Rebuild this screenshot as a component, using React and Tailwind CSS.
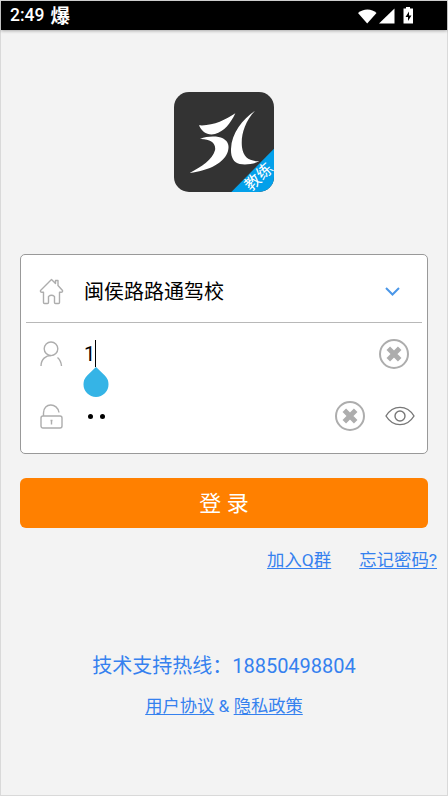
const ClearIcon = () => (
  <svg viewBox="0 0 30 30" className="size-[30px] shrink-0" fill="none" stroke="#adadad">
    <circle cx="15" cy="15" r="14" strokeWidth="2" />
    <path d="M9.3 9.3 20.7 20.7M20.7 9.3 9.3 20.7" strokeWidth="5" />
  </svg>
);

const Logo = () => (
  <svg viewBox="0 0 300 300" className="size-[100px] rounded-[15px] bg-[#333333]">
    <path
      fill="#fff"
      d="M75 100C115 103 154 84 184 64C170 94 151 119 123 126C101 131 83 120 75 100ZM78 141C101 131 133 132 146 139C160 147 167 157 162 177C153 210 108 236 47 243C83 225 116 202 123 175C127 153 108 140 78 141ZM243 56C211 91 200 131 204 166C208 196 225 208 256 208C239 217 213 219 197 216C178 212 170 194 171 171C173 122 205 83 243 56Z"
    />
    <path fill="#03a0ea" d="M300 170V300H172Z" />
    <text
      x="251"
      y="251"
      transform="rotate(-43 251 251)"
      textAnchor="middle"
      dominantBaseline="central"
      fill="#fff"
      fontSize="48"
      className="font-['Noto_Sans_CJK_SC',sans-serif]"
    >
      教练
    </text>
  </svg>
);

export default function App() {
  return (
    <div className="flex h-[796px] w-[448px] flex-col border border-[#d9d9d9] bg-[#f3f3f3] font-['Roboto','Noto_Sans_CJK_SC',sans-serif] text-black">
      <header className="flex h-[29px] shrink-0 items-center bg-black pl-[9px] pr-[33px] text-white shadow-[0_1px_3px_rgba(0,0,0,0.3)]">
        <span className="text-[17.5px] font-medium leading-none">2:49</span>
        <span className="ml-[6px] pt-[2px] text-[19.5px] font-bold leading-[27px]">爆</span>
        <svg viewBox="0 0 57 18" className="ml-auto h-[18px] w-[57px]" fill="#fff">
          <path d="M1 6C6 1.2 15 1.2 19.500 6L10.200 16.500Z" />
          <path d="M37.500 1.500V16.500H22Z" />
          <path d="M49 1.500V0H53V1.500H56V16.500H46.500V1.500Z" />
          <path d="M52 4.500 48.500 10H51V14L54.500 8.500H52Z" fill="#000" />
        </svg>
      </header>

      <div className="mt-[62px] flex justify-center">
        <Logo />
      </div>

      <section className="mx-[19px] mt-[62px] h-[200px] shrink-0 rounded-[5px] border-[1.500px] border-[#999] bg-white">
        <div className="mx-[5px] flex h-[68px] items-center border-b border-[#b8b8b8] pl-[13px] pr-[22px] pt-[6px]">
          <svg viewBox="0 0 25 27" className="h-[27px] w-[25px]" fill="none" stroke="#adadad" strokeWidth="1.4" strokeLinejoin="round">
            <path d="M12.500 1.500 1.500 12.500Q1 14 3 14.200H4.500V24.500Q4.500 25.500 5.500 25.500H8.500Q9.500 25.500 9.500 24.500V18.500Q12.500 16 15.500 18.500V24.500Q15.500 25.500 16.500 25.500H19.500Q20.500 25.500 20.500 24.500V14.200H22Q24 14 23.500 12.500L19 7.500V2.500H16.500V5.500Z" />
          </svg>
          <span className="ml-[20px] text-[20px] leading-7">闽侯路路通驾校</span>
          <svg viewBox="0 0 15 9" className="ml-auto h-[9px] w-[15px]" fill="none" stroke="#4b97e8" strokeWidth="2">
            <path d="M1 1 7.500 7.500 14 1" />
          </svg>
        </div>

        <div className="flex h-[61px] items-center pl-[19px] pr-[18px]">
          <svg viewBox="0 0 23 26" className="h-[26px] w-[23px]" fill="none" stroke="#adadad" strokeWidth="1.4">
            <circle cx="11" cy="7.800" r="6.800" />
            <path d="M1 25C1 18 6 14.500 11 14.500M17.500 16.500Q21 19.500 21.500 25" />
          </svg>
          <div className="relative ml-[21px] flex h-[27px] items-center text-[20px]">
            <span>1</span>
            <span className="absolute left-[11px] top-0 h-[27px] w-px bg-black" />
            <svg viewBox="0 0 26 30" className="absolute -left-px top-[27px] h-[30px] w-[26px]" fill="#35b4e6">
              <path d="M13 0 21.800 8.500A12.500 12.500 0 1 1 4.200 8.500Z" />
            </svg>
          </div>
          <div className="ml-auto flex">
            <ClearIcon />
          </div>
        </div>

        <div className="flex h-[64px] items-center pl-[19px] pr-3">
          <svg viewBox="0 0 23 25" className="h-[25px] w-[23px]" fill="none" stroke="#adadad" strokeWidth="1.4">
            <rect x="1" y="12" width="21" height="12" rx="2" />
            <path d="M3.500 12V9C3.500-1.500 17.500-1.500 19 8.500M11.500 16V20.500M10.500 16.500H12.500" />
          </svg>
          <div className="ml-[25px] flex gap-[7px]">
            <span className="size-[5px] rounded-full bg-black" />
            <span className="size-[5px] rounded-full bg-black" />
          </div>
          <div className="ml-auto flex items-center gap-5">
            <ClearIcon />
            <svg viewBox="0 0 30 20" className="h-5 w-[30px]" fill="none" stroke="#777" strokeWidth="1.4">
              <path d="M1 10C8-1.500 22-1.500 29 10C22 21.500 8 21.500 1 10Z" />
              <circle cx="15" cy="10" r="5" />
            </svg>
          </div>
        </div>
      </section>

      <button className="mx-[19px] mt-[24px] h-[50px] shrink-0 rounded-[6px] bg-[#ff8000] pt-px text-[22px] leading-[50px] text-white">
        登 录
      </button>

      <nav className="mt-[18px] flex h-[28px] justify-end gap-7 pr-[10px] text-[17.400px] leading-[28px] text-[#3581ef]">
        <a className="underline decoration-1 underline-offset-2">加入Q群</a>
        <a className="underline decoration-1 underline-offset-2">忘记密码?</a>
      </nav>

      <footer className="mt-[77px] text-center text-[#3581ef]">
        <p className="text-[20px] leading-[30px]">技术支持热线：18850498804</p>
        <p className="mt-[11px] text-[17.300px] leading-[28px]">
          <a className="underline decoration-1 underline-offset-2">用户协议</a> &amp; <a className="underline decoration-1 underline-offset-2">隐私政策</a>
        </p>
      </footer>
    </div>
  );
}
